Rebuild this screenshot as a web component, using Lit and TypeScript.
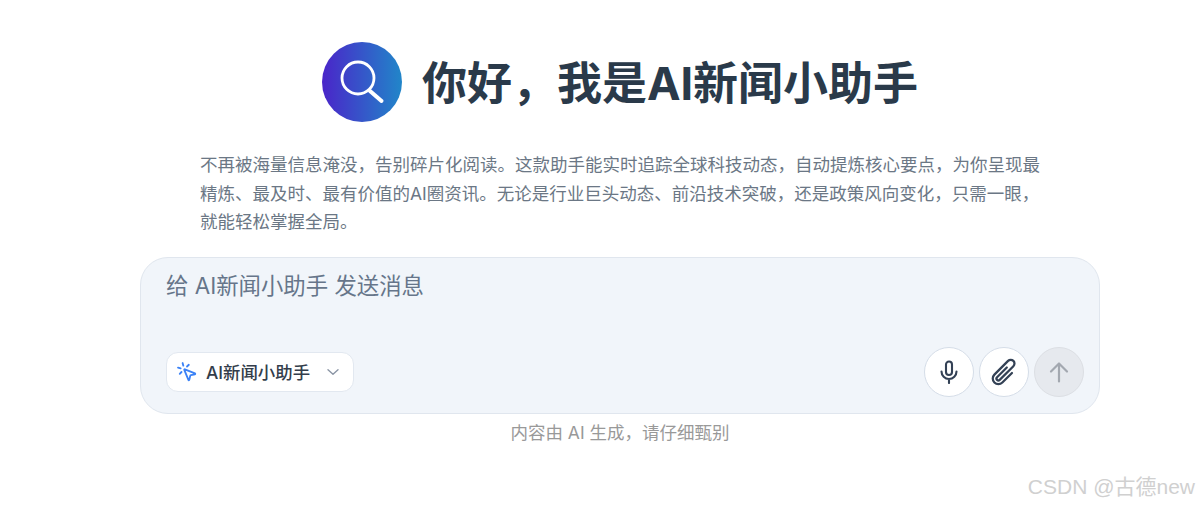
import { LitElement, html, css } from 'lit';
import { customElement } from 'lit/decorators.js';

@customElement('app-root')
export class AppRoot extends LitElement {
  static styles = css`
    :host {
      display: block;
      position: relative;
      height: 507px;
      overflow: hidden;
      background: #fff;
      font-family: Inter, "Noto Sans CJK SC", sans-serif;
    }

    .page {
      display: flex;
      flex-direction: column;
      align-items: center;
      width: 960px;
      margin-left: 140px;
      padding-top: 42px;
    }

    .header {
      display: flex;
      align-items: center;
      gap: 20px;
      height: 80px;
    }

    .logo {
      width: 80px;
      height: 80px;
      border-radius: 50%;
      background: linear-gradient(90deg, #4a25c9 0%, #2186c9 100%);
      display: flex;
      align-items: center;
      justify-content: center;
    }

    h1 {
      margin: 0;
      padding-top: 4px;
      font-size: 45px;
      line-height: 80px;
      font-weight: 700;
      color: #2a3a4a;
      white-space: nowrap;
    }

    .desc {
      box-sizing: border-box;
      width: 960px;
      margin: 29px 0 0;
      padding: 0 55px 0 60px;
      font-size: 17.5px;
      line-height: 28.5px;
      color: #6b7785;
    }

    .box {
      box-sizing: border-box;
      width: 960px;
      height: 157px;
      margin-top: 20px;
      padding: 13px 15px 16px 25px;
      background: #f1f5fa;
      border: 1px solid #e0e6ee;
      border-radius: 28px;
      display: flex;
      flex-direction: column;
      justify-content: space-between;
    }

    .placeholder {
      font-size: 22.4px;
      line-height: 30px;
      color: #66758a;
    }

    .controls {
      display: flex;
      align-items: center;
      justify-content: space-between;
    }

    .chip {
      box-sizing: border-box;
      width: 188px;
      height: 40px;
      padding: 0 12px 0 9px;
      background: #fff;
      border: 1px solid #e2e8f0;
      border-radius: 12px;
      display: flex;
      align-items: center;
      font-size: 17.4px;
      font-weight: 500;
      color: #333d4b;
    }

    .chip-label {
      margin-left: 8px;
      flex: 1;
    }

    .actions {
      display: flex;
      gap: 5px;
    }

    .round {
      box-sizing: border-box;
      width: 50px;
      height: 50px;
      border-radius: 50%;
      background: #fff;
      border: 1px solid #d5dde8;
      display: flex;
      align-items: center;
      justify-content: center;
    }

    .round.off {
      background: #e6e9ee;
      border-color: #dcdfe4;
    }

    .note {
      margin-top: 7px;
      font-size: 17.5px;
      line-height: 24px;
      color: #999;
    }

    .mark {
      position: absolute;
      right: 3px;
      top: 473px;
      font-family: "Liberation Sans", "Noto Sans CJK SC", sans-serif;
      font-size: 21px;
      line-height: 28px;
      color: #d0d0d0;
      white-space: nowrap;
    }

    svg {
      display: block;
      fill: none;
    }
  `;

  render() {
    return html`
      <div class="page">
        <div class="header">
          <div class="logo">
            <svg width="48" height="48" viewBox="0 0 48 48" stroke="#fff" stroke-linecap="round">
              <circle cx="20" cy="20" r="16" stroke-width="2.8"></circle>
              <path d="M32 33l11.5 10" stroke-width="4"></path>
            </svg>
          </div>
          <h1>你好，我是AI新闻小助手</h1>
        </div>
        <p class="desc">不再被海量信息淹没，告别碎片化阅读。这款助手能实时追踪全球科技动态，自动提炼核心要点，为你呈现最精炼、最及时、最有价值的AI圈资讯。无论是行业巨头动态、前沿技术突破，还是政策风向变化，只需一眼，就能轻松掌握全局。</p>
        <div class="box">
          <div class="placeholder">给 AI新闻小助手 发送消息</div>
          <div class="controls">
            <div class="chip">
              <svg width="22" height="22" viewBox="0 0 24 24" stroke="#3b82f6" stroke-width="2" stroke-linecap="round" stroke-linejoin="round">
                <path d="M14 4.1 12 6M5.1 8l-2.9-.8M6 12l-1.9 2M7.2 2.2 8 5.1"></path>
                <path d="M9.037 9.69a.498.498 0 0 1 .653-.653l11 4.5a.5.5 0 0 1-.074.949l-4.349 1.041a1 1 0 0 0-.74.739l-1.04 4.35a.5.5 0 0 1-.95.074z"></path>
              </svg>
              <span class="chip-label">AI新闻小助手</span>
              <svg width="16" height="16" viewBox="0 0 16 16" stroke="#8b95a5" stroke-width="1.4" stroke-linecap="round" stroke-linejoin="round">
                <path d="M3 5.8L8 10.3l5-4.5"></path>
              </svg>
            </div>
            <div class="actions">
              <div class="round">
                <svg width="24" height="24" viewBox="0 0 24 24" stroke="#334155" stroke-width="2.1" stroke-linecap="round" stroke-linejoin="round">
                  <rect x="9" y="1.5" width="6" height="13.5" rx="3"></rect>
                  <path d="M4.5 11.5a7.5 7.5 0 0 0 15 0M12 19v4"></path>
                </svg>
              </div>
              <div class="round">
                <svg width="30" height="30" viewBox="0 0 24 24" stroke="#334155" stroke-width="1.8" stroke-linecap="round" stroke-linejoin="round">
                  <path d="M18.375 12.739l-7.693 7.693a4.5 4.5 0 01-6.364-6.364l10.94-10.94A3 3 0 1119.5 7.372L8.552 18.32m.009-.01l-.01.01m5.699-9.941l-7.81 7.81a1.5 1.5 0 002.112 2.13"></path>
                </svg>
              </div>
              <div class="round off">
                <svg width="24" height="24" viewBox="0 0 24 24" stroke="#a3a8b0" stroke-width="2.2" stroke-linecap="round" stroke-linejoin="round">
                  <path d="M12 21.5V3.5M4 11.5L12 3.5l8 8"></path>
                </svg>
              </div>
            </div>
          </div>
        </div>
        <div class="note">内容由 AI 生成，请仔细甄别</div>
      </div>
      <div class="mark">CSDN @古德new</div>
    `;
  }
}
